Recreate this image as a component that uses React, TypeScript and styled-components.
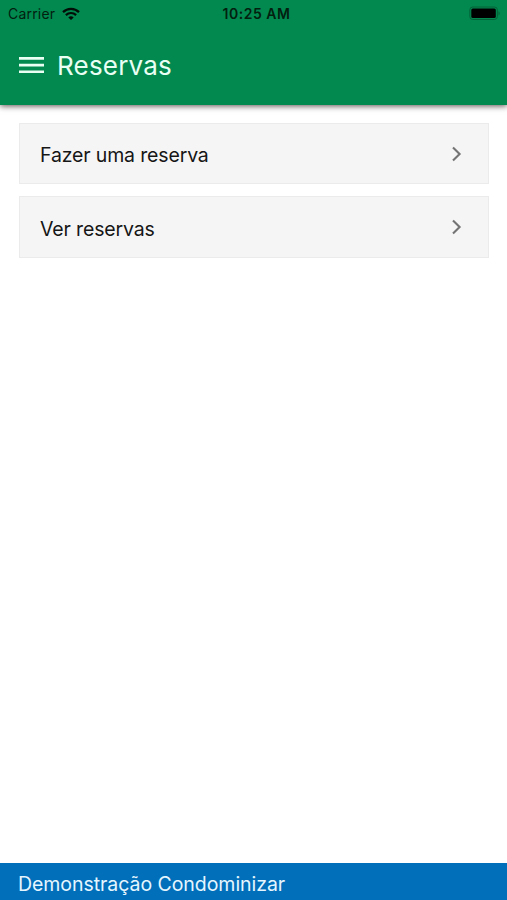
import React from "react";
import styled, { createGlobalStyle } from "styled-components";

const GlobalStyle = createGlobalStyle`
  * { box-sizing: border-box; }
  body { margin: 0; background: #fff; font-family: Inter, "Liberation Sans", sans-serif; }
`;

const Screen = styled.div`
  display: flex;
  flex-direction: column;
  height: 100vh;
  overflow: hidden;
`;

const Header = styled.header`
  height: 105px;
  flex: none;
  background: #02894f;
  box-shadow: 0 1px 6px rgba(40, 20, 20, 0.75);
`;

const StatusBar = styled.div`
  display: grid;
  grid-template-columns: 1fr auto 1fr;
  align-items: center;
  height: 27px;
  padding: 0 7px 0 8px;
  color: #03200f;
`;

const Carrier = styled.div`
  display: flex;
  align-items: center;
  gap: 7px;
  font-size: 14px;
  line-height: 27px;
  letter-spacing: 0.2px;
`;

const Clock = styled.time`
  font-size: 14px;
  font-weight: 600;
  line-height: 27px;
  letter-spacing: 0.5px;
  padding-left: 5px;
`;

const Battery = styled.svg`
  justify-self: end;
`;

const Toolbar = styled.div`
  display: flex;
  align-items: center;
  height: 76px;
  padding-left: 19px;
  gap: 13px;
`;

const MenuButton = styled.button`
  display: flex;
  padding: 0;
  border: 0;
  background: none;
`;

const Title = styled.h1`
  margin: 0;
  padding-top: 1px;
  font-size: 26px;
  line-height: 32px;
  font-weight: 400;
  letter-spacing: 0.2px;
  color: #e9fff4;
`;

const Menu = styled.main`
  flex: 1;
  display: flex;
  flex-direction: column;
  gap: 12px;
  padding: 18px 18px 0 19px;
`;

const MenuItem = styled.button`
  display: flex;
  align-items: center;
  justify-content: space-between;
  width: 100%;
  height: 61.4px;
  padding: 3px 25px 0 20px;
  border: 1px solid #ebebeb;
  background: #f5f5f5;
  color: #161616;
  font: inherit;
  font-size: 19.5px;
  letter-spacing: -0.15px;
  text-align: left;
`;

const Chevron = styled.svg`
  display: block;
  margin-top: -3px;
`;

const Footer = styled.footer`
  flex: none;
  height: 37px;
  padding-left: 18px;
  background: #026fba;
  color: #e5f6ff;
  font-size: 19.5px;
  letter-spacing: -0.05px;
  line-height: 42px;
`;

const items = ["Fazer uma reserva", "Ver reservas"];

export default function App() {
  return (
    <Screen>
      <GlobalStyle />
      <Header>
        <StatusBar>
          <Carrier>
            <span>Carrier</span>
            <svg width="18" height="14" viewBox="0 0 18 14" fill="none" stroke="#010d06" strokeWidth="2.2">
              <path d="M1 5.1C5.5.7 12.5.7 17 5.1" />
              <path d="M3.9 8.1c2.9-2.8 7.3-2.8 10.2 0" />
              <path d="M6.3 10.4c1.6-1.4 3.8-1.4 5.4 0L9 13z" fill="#010d06" stroke="none" />
            </svg>
          </Carrier>
          <Clock>10:25 AM</Clock>
          <Battery width="31" height="15" viewBox="0 0 31 15">
            <rect x="0.8" y="1" width="27.6" height="12.5" rx="3" fill="none" stroke="#046239" />
            <rect x="2.3" y="2.6" width="24.5" height="9.3" rx="1.5" fill="#000" />
            <path d="M29.5 5.2c1.5.7 1.5 3.6 0 4.3z" fill="#046239" />
          </Battery>
        </StatusBar>
        <Toolbar>
          <MenuButton aria-label="Menu">
            <svg width="25" height="18" viewBox="0 0 25 18" fill="#e9fff4">
              <path d="M0 1h25v2.7H0zM0 7.7h25v2.7H0zM0 14.4h25v2.7H0z" />
            </svg>
          </MenuButton>
          <Title>Reservas</Title>
        </Toolbar>
      </Header>
      <Menu>
        {items.map((label) => (
          <MenuItem key={label}>
            <span>{label}</span>
            <Chevron width="12" height="18" viewBox="0 0 12 18" fill="none" stroke="#747474" strokeWidth="2.1">
              <path d="M2 2.5 8.6 9 2 15.5" />
            </Chevron>
          </MenuItem>
        ))}
      </Menu>
      <Footer>Demonstração Condominizar</Footer>
    </Screen>
  );
}
